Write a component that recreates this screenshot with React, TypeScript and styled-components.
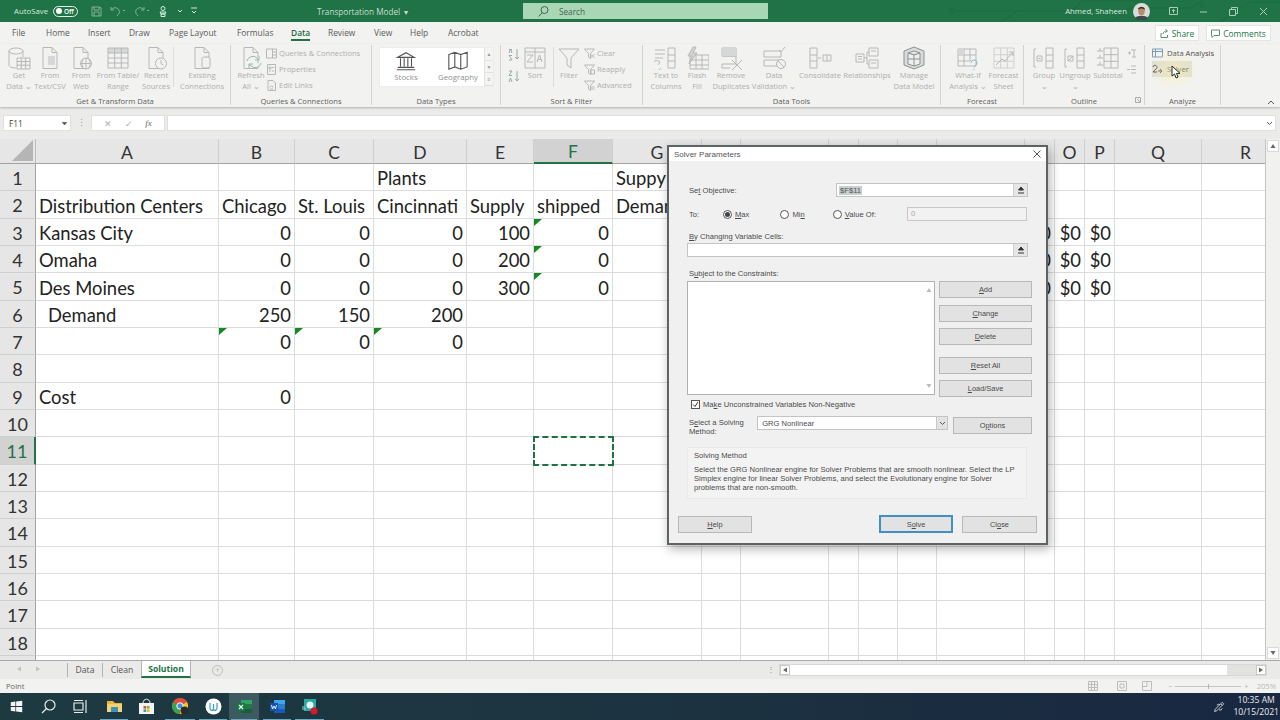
import React from 'react';
import styled, { createGlobalStyle } from 'styled-components';

const UI = `"Open Sans", "Noto Sans", sans-serif`;
const DLG = `"Liberation Sans", Arial, sans-serif`;

const Global = createGlobalStyle`
  html, body { margin: 0; padding: 0; background: #fff; }
  #root { width: 1280px; height: 720px; overflow: hidden; }
  * { box-sizing: border-box; }
`;

const Page = styled.div`
  position: relative; width: 1280px; height: 720px; overflow: hidden;
  display: flex; flex-direction: column; font-family: ${UI}; background: #f1f1ef;
`;

/* ---------- title bar ---------- */
const TitleBar = styled.div`
  position: relative; height: 22px; background: #207346; display: flex; align-items: center;
  color: #d5e8dc; font-size: 8.3px; flex: none; overflow: hidden;
`;
const QuickAccess = styled.div`width: 317px; flex: none; display: flex; align-items: center; padding-left: 14px;`;
const AutoSave = styled.span`width: 39px; flex: none; white-space: nowrap; font-size: 7.8px;`;
const Toggle = styled.span`
  width: 25px; height: 11px; border: 1px solid #e8f2ec; border-radius: 6px; display: flex; align-items: center;
  padding-left: 2px; gap: 2px; font-size: 6.5px; color: #fff; font-weight: 600; flex: none; margin-right: 12px;
  &::before { content: ''; width: 6px; height: 6px; border-radius: 50%; background: #fff; }
`;
const QaSvg = styled.svg<{ $w?: number }>`
  width: ${p => p.$w ?? 13}px; height: 13px; fill: none; stroke: #7fb296; stroke-width: 1; flex: none; margin-right: 6px;
`;
const DocTitle = styled.div`width: 206px; flex: none; white-space: nowrap; font-size: 8.2px; color: #c5dfd0;`;
const SearchBox = styled.div`
  width: 245px; height: 16px; flex: none; background: #a9d7b6; display: flex; align-items: center;
  padding-left: 14px; gap: 9px; color: #41674f; font-size: 8.2px;
`;
const UserArea = styled.div`margin-left: auto; display: flex; align-items: center; font-size: 7.8px; color: #d9eadf; position: relative;`;
const Avatar = styled.svg`width: 17px; height: 17px; margin: 0 19px 0 6px; flex: none;`;
const WinBtn = styled.svg`width: 9px; height: 9px; margin-right: 21px; fill: none; stroke: #a8ceb8; stroke-width: 1; flex: none;`;
const Circuit = styled.svg`position: absolute; left: 940px; top: 0; width: 340px; height: 22px; fill: none; stroke: #1d6a40; stroke-width: 1;`;

/* ---------- tabs ---------- */
const TabRow = styled.div`height: 22px; flex: none; display: flex; align-items: center; padding-left: 12px; background: #f2f2f0; position: relative;`;
const Tab = styled.div<{ $w: number; $on?: boolean }>`
  width: ${p => p.$w}px; flex: none; font-size: 8.4px; color: ${p => (p.$on ? '#1f6b41' : '#5a5a5a')};
  font-weight: ${p => (p.$on ? 600 : 400)}; white-space: nowrap; height: 22px; line-height: 22px;
  position: relative;
  ${p => p.$on ? `&::after { content: ''; position: absolute; left: 0; width: 19px; bottom: 3px; height: 2px; background: #217346; }` : ''}
`;
const TabActions = styled.div`margin-left: auto; display: flex; gap: 7px; padding-right: 9px; align-items: center;`;
const ActionBtn = styled.div<{ $w: number }>`
  width: ${p => p.$w}px; height: 16px; background: #fff; border: 1px solid #e4e4e2; color: #217346;
  font-size: 8.4px; display: flex; align-items: center; justify-content: center; gap: 3px; white-space: nowrap;
`;
const ActionIcon = styled.svg`width: 9px; height: 9px; fill: none; stroke: #5a8c70; stroke-width: 1; flex: none;`;

/* ---------- ribbon ---------- */
const Ribbon = styled.div`
  height: 63px; flex: none; display: flex; background: #f2f2f0; padding-top: 1px; position: relative;
  box-shadow: 0 1px 2px rgba(0,0,0,.25); z-index: 2;
`;
const Group = styled.div<{ $w: number }>`
  width: ${p => p.$w}px; flex: none; height: 60px; border-right: 1px solid #d3d3d1; display: flex; flex-direction: column;
`;
const GroupBody = styled.div<{ $pad?: number }>`height: 50px; display: flex; padding-left: ${p => p.$pad ?? 0}px; flex: none;`;
const GroupLabel = styled.div`font-size: 7.6px; color: #5e5e5e; text-align: center; line-height: 11px; white-space: nowrap; padding-top: 1px;`;
const Big = styled.div<{ $w: number }>`
  width: ${p => p.$w}px; flex: none; display: flex; flex-direction: column; align-items: center;
  padding-top: 1px; font-size: 7.6px; line-height: 11px; color: #adafaf; text-align: center; white-space: nowrap;
`;
const Ico = styled.svg<{ $s?: number; $dark?: boolean }>`
  width: ${p => p.$s ?? 24}px; height: ${p => p.$s ?? 24}px; flex: none; fill: none;
  stroke: ${p => (p.$dark ? '#555' : '#b6b8b8')}; stroke-width: 1;
`;
const VSep = styled.div<{ $ml?: number }>`width: 1px; height: 40px; background: #dcdcda; flex: none; margin: 2px 0 0 ${p => p.$ml ?? 0}px;`;
const SmallCol = styled.div<{ $w: number; $ml?: number }>`width: ${p => p.$w}px; flex: none; display: flex; flex-direction: column; margin-left: ${p => p.$ml ?? 0}px;`;
const Small = styled.div<{ $dark?: boolean; $hi?: boolean }>`
  height: 16px; display: flex; align-items: center; gap: 2px; font-size: 7.6px; white-space: nowrap;
  color: ${p => (p.$dark ? '#4c4c4c' : '#adafaf')}; ${p => p.$hi ? 'background:#dfdfd6;' : ''}
`;
const Gallery = styled.div`
  width: 115px; height: 40px; margin: 2px 0 0 7px; background: #fff; display: flex; flex: none; border: 1px solid #ececea;
  position: relative;
`;
const GalleryItem = styled.div<{ $w: number }>`
  width: ${p => p.$w}px; flex: none; display: flex; flex-direction: column; align-items: center; padding-top: 2px;
  font-size: 7.8px; color: #8f8f8f; line-height: 11px;
`;
const GalleryScroll = styled.div`width: 10px; margin-left: auto; display: flex; flex-direction: column; background: #f4f4f2; border-left: 1px solid #e2e2e0;`;
const GalleryStep = styled.div`flex: 1; border-bottom: 1px solid #e2e2e0; font-size: 5px; color: #9a9a9a; display: flex; align-items: center; justify-content: center;`;
const Collapse = styled.svg`position: absolute; right: 5px; bottom: 2px; width: 8px; height: 6px; fill: none; stroke: #555; stroke-width: 1;`;
const Launcher = styled.svg`position: absolute; right: 3px; bottom: 2px; width: 6px; height: 6px; fill: none; stroke: #aaa;`;
const RelGroup = styled(Group)`position: relative;`;

/* ---------- formula bar ---------- */
const FormulaBar = styled.div`height: 32px; flex: none; background: #ebebea; display: flex; align-items: flex-start; padding: 8px 4px 0 3px;`;
const NameBox = styled.div`
  width: 68px; height: 16px; background: #fff; border: 1px solid #e0e0e0; font-size: 8.4px; color: #444; flex: none;
  padding-left: 5px; display: flex; align-items: center; justify-content: space-between; padding-right: 3px;
`;
const Dots = styled.div`width: 20px; flex: none; color: #999; font-size: 9px; text-align: center; line-height: 15px;`;
const FxBox = styled.div`
  width: 74px; height: 16px; background: #fff; border: 1px solid #e0e0e0; flex: none; display: flex; align-items: center;
  justify-content: space-around; padding: 0 6px; color: #b0b0b0; font-size: 9px;
`;
const FxLabel = styled.span`font-family: "Liberation Serif", serif; font-style: italic; color: #666; font-size: 9px;`;
const FormulaInput = styled.div`
  flex: 1; margin-left: 2px; height: 16px; background: #fff; border: 1px solid #e0e0e0; display: flex; align-items: center;
  justify-content: flex-end; padding-right: 2px;
`;
const Chevron = styled.svg<{ $w?: number }>`width: ${p => p.$w ?? 7}px; height: 5px; fill: none; stroke: #555; stroke-width: 1;`;

/* ---------- sheet ---------- */
const SheetArea = styled.div`height: 521px; flex: none; display: flex; background: #fff; overflow: hidden;`;
const COLS = [183, 76, 79, 93, 67, 79, 89, 39, 88, 30, 39, 39, 88, 30, 30, 30, 87, 88];
const LETTERS = 'ABCDEFGHIJKLMNOPQR'.split('');
const Grid = styled.div`
  width: 1266px; flex: none; display: grid; overflow: hidden; height: 521px; border-right: 1px solid #c4c4c4;
  grid-template-columns: 36px ${COLS.map(c => c + 'px').join(' ')};
  grid-template-rows: 25px repeat(19, 27.33px);
  font-family: Lato, "Open Sans", sans-serif; font-size: 18.4px; color: #222;
`;
const Corner = styled.div`
  background: #e6e6e6; border-bottom: 1px solid #a3a3a3; border-right: 1px solid #bdbdbd; display: flex;
  align-items: flex-end; justify-content: flex-end; padding: 0 2px 2px 0;
`;
const CornerTri = styled.svg`width: 21px; height: 21px; fill: #b5b5b5;`;
const ColHead = styled.div<{ $sel?: boolean }>`
  background: ${p => (p.$sel ? '#d2d2d2' : '#e6e6e6')}; border-right: 1px solid #cfcfcf;
  border-bottom: ${p => (p.$sel ? '2px solid #217346' : '1px solid #a3a3a3')}; padding-top: 2px;
  color: ${p => (p.$sel ? '#217346' : '#333')}; font-size: 17.5px; display: flex; align-items: center; justify-content: center;
`;
const RowHead = styled.div<{ $sel?: boolean }>`
  background: ${p => (p.$sel ? '#d2d2d2' : '#e6e6e6')}; border-bottom: 1px solid #cfcfcf; padding-top: 2px;
  border-right: ${p => (p.$sel ? '2px solid #217346' : '1px solid #a3a3a3')};
  color: ${p => (p.$sel ? '#217346' : '#333')}; font-size: 18px; display: flex; align-items: center; justify-content: center;
`;
const Cell = styled.div<{ $right?: boolean; $indent?: boolean; $ants?: boolean }>`
  position: relative; border-right: 1px solid #dcdcdc; border-bottom: 1px solid #dcdcdc; white-space: nowrap;
  display: flex; align-items: flex-end; line-height: 24px; overflow: visible; padding: 0 3px;
  justify-content: ${p => (p.$right ? 'flex-end' : 'flex-start')};
  ${p => p.$indent ? 'padding-left: 12px;' : ''}
  ${p => p.$ants ? 'outline: 2px dashed #1f7144; outline-offset: -1px; z-index: 1;' : ''}
`;
const ErrorMark = styled.span`
  position: absolute; left: 0; top: 0; width: 0; height: 0; border-top: 7px solid #13891f; border-right: 8px solid transparent;
`;
const VScroll = styled.div`
  width: 14px; flex: none; background: #f1f1ef; display: flex; flex-direction: column; justify-content: space-between; padding: 1px;
`;
const ScrollBtn = styled.div`
  height: 12px; background: #fff; border: 1px solid #dadada; display: flex; align-items: center; justify-content: center;
`;
const Arrow = styled.svg<{ $c?: string }>`width: 6px; height: 6px; fill: ${p => p.$c ?? '#666'}; stroke: none; flex: none;`;

/* ---------- sheet tabs ---------- */
const TabsBar = styled.div`height: 19px; flex: none; display: flex; align-items: flex-start; background: #eaeae9; border-top: 1px solid #a8a8a8;`;
const NavArrows = styled.div`width: 67px; flex: none; display: flex; gap: 13px; padding: 5px 0 0 16px;`;
const SheetTab = styled.div<{ $w: number; $on?: boolean }>`
  width: ${p => p.$w}px; height: ${p => (p.$on ? 17 : 14)}px; flex: none; font-size: 8.6px; display: flex; align-items: center; justify-content: center;
  color: ${p => (p.$on ? '#217346' : '#555')}; font-weight: ${p => (p.$on ? 700 : 400)};
  border-left: 1px solid #b4b4b4; margin-top: ${p => (p.$on ? 0 : 2)}px;
  background: ${p => (p.$on ? '#fff' : 'transparent')};
  ${p => p.$on ? 'border-bottom: 2px solid #217346; border-right: 1px solid #b4b4b4;' : ''}
`;
const AddSheet = styled.div`
  width: 11px; height: 11px; border-radius: 50%; border: 1px solid #bcbcbc; color: #bcbcbc; flex: none; margin: 4px 0 0 21px;
  font-size: 9px; line-height: 8px; text-align: center;
`;
const TabSplit = styled.div`width: 1px; flex: none; color: #888; margin: 0 0 0 544px; font-size: 8px; line-height: 16px;`;
const HScroll = styled.div`
  width: 488px; height: 12px; margin: 3px 0 0 11px; flex: none; display: flex; background: #e2e2e0; border: 1px solid #d8d8d8;
`;
const HBtn = styled.div<{ $end?: boolean }>`
  width: 10px; flex: none; background: #fff; border: 1px solid #c8c8c8; display: flex; align-items: center; justify-content: center;
  ${p => p.$end ? 'margin-left: auto;' : ''}
`;
const HThumb = styled.div`width: 437px; flex: none; background: #fff;`;

/* ---------- status ---------- */
const StatusBar = styled.div`height: 14px; flex: none; background: #f2f2f0; display: flex; align-items: center; padding-left: 6px; font-size: 7.6px; color: #666;`;
const StatusRight = styled.div`margin-left: auto; display: flex; align-items: center; color: #b9b9b9; padding-right: 4px;`;
const StatusIco = styled.svg<{ $mr: number }>`width: 10px; height: 10px; fill: none; stroke: #bdbdbd; stroke-width: 1; margin-right: ${p => p.$mr}px; flex: none;`;
const ZoomTrack = styled.div`
  position: relative; width: 66px; height: 1px; background: #c6c6c6; margin: 0 3px;
  &::after { content: ''; position: absolute; left: 33px; top: -2px; width: 1px; height: 5px; background: #b5b5b5; }
`;
const ZoomPct = styled.span`margin-left: 8px;`;

/* ---------- taskbar ---------- */
const Taskbar = styled.div`
  height: 27px; flex: none; background: linear-gradient(90deg, #1e3a41 0%, #1c3440 45%, #192741 100%);
  display: flex; align-items: center; color: #f2f2f2;
`;
const TaskSlot = styled.div<{ $w: number; $on?: boolean; $open?: boolean; $ml?: number }>`
  width: ${p => p.$w}px; height: 27px; flex: none; display: flex; align-items: center; justify-content: center; position: relative;
  margin-left: ${p => p.$ml ?? 0}px;
  background: ${p => (p.$on ? '#3d5a60' : 'transparent')};
  ${p => p.$open ? `&::after { content: ''; position: absolute; left: 2px; right: 2px; bottom: 0; height: 1.5px; background: #6ea6c6; }` : ''}
`;
const TaskIcon = styled.svg<{ $s?: number }>`width: ${p => p.$s ?? 17}px; height: ${p => p.$s ?? 17}px; flex: none;`;
const Clock = styled.div`margin-left: auto; display: flex; align-items: center; padding-right: 1px;`;
const PenIcon = styled(TaskIcon)`margin-right: 7px;`;
const ClockText = styled.div`font-size: 8.6px; line-height: 12px; text-align: right; color: #e8edf0; white-space: nowrap; margin-bottom: 2px;`;
const ClockLine = styled.div`text-align: center;`;

/* ---------- dialog ---------- */
const Dialog = styled.div`
  position: absolute; left: 667px; top: 145px; width: 381px; height: 400px; z-index: 5; background: #f0f0f0;
  border: 2px solid #5e6366; box-shadow: 2px 4px 10px rgba(0,0,0,.3); display: flex; flex-direction: column;
  font-family: ${DLG}; font-size: 7.6px; color: #4a4a4a; letter-spacing: .02px;
`;
const DlgTitle = styled.div`
  height: 14px; flex: none; background: #fff; display: flex; align-items: center; justify-content: space-between;
  padding: 0 5px 0 5px; font-size: 8px; color: #555;
`;
const DlgClose = styled.svg`width: 8px; height: 8px; fill: none; stroke: #555; stroke-width: 1;`;
const DlgBody = styled.div`flex: 1; padding: 22px 0 0 18px; display: flex; flex-direction: column;`;
const DlgRow = styled.div<{ $mt?: number; $top?: boolean }>`
  display: flex; align-items: ${p => (p.$top ? 'flex-start' : 'center')}; margin-top: ${p => p.$mt ?? 0}px; flex: none;
`;
const Lbl = styled.span<{ $w?: number }>`
  ${p => (p.$w ? `width: ${p.$w}px; flex: none;` : '')} padding-left: 2px; white-space: nowrap;
`;
const RefInput = styled.div<{ $w: number }>`
  width: ${p => p.$w}px; height: 14px; background: #fff; border: 1px solid #c4c4c4; flex: none; display: flex; align-items: center;
  justify-content: space-between; padding-left: 2px;
`;
const Selected = styled.span`background: #c9cfcf; color: #555; padding: 0 1px;`;
const RefBtn = styled.div`
  width: 14px; height: 12px; background: #e6e6e6; border-left: 1px solid #d0d0d0; display: flex; align-items: center; justify-content: center;
`;
const RefIcon = styled.svg`width: 8px; height: 8px; fill: #333; stroke: #333;`;
const Radio = styled.span<{ $on?: boolean; $ml: number }>`
  width: 9px; height: 9px; border-radius: 50%; border: 1px solid #555; background: #fff; flex: none; margin: 0 3px 0 ${p => p.$ml}px;
  display: flex; align-items: center; justify-content: center;
  ${p => p.$on ? `&::after { content: ''; width: 5px; height: 5px; border-radius: 50%; background: #444; }` : ''}
`;
const RadioText = styled.span`white-space: nowrap; flex: none;`;
const ValueInput = styled.div`
  width: 120px; height: 14px; border: 1px solid #c8c8c8; background: #f2f2f2; color: #a8a8a8; flex: none; padding-left: 3px; line-height: 12px; margin-left: auto; margin-right: 19px;
`;
const Constraints = styled.div`
  width: 248px; height: 114px; background: #fff; border: 1px solid #b0b0b0; flex: none; display: flex; flex-direction: column;
  align-items: flex-end; justify-content: space-between; padding: 5px 2px;
`;
const SideButtons = styled.div`width: 93px; margin-left: 4px; display: flex; flex-direction: column; flex: none;`;
const DlgBtn = styled.div<{ $mt?: number; $ml?: number; $h?: number; $w?: number; $def?: boolean }>`
  width: ${p => (p.$w ? p.$w + 'px' : '100%')}; height: ${p => p.$h ?? 17}px; flex: none; margin-top: ${p => p.$mt ?? 0}px; margin-left: ${p => p.$ml ?? 0}px;
  background: #e2e2e2; border: 1px solid ${p => (p.$def ? '#3f8ec4' : '#b8b8b8')}; ${p => p.$def ? 'box-shadow: inset 0 0 0 1px #3f8ec4;' : ''}
  display: flex; align-items: center; justify-content: center; white-space: nowrap; font-size: 7.4px; color: #4a4a4a;
`;
const Check = styled.span`width: 9px; height: 9px; border: 1px solid #555; background: #fff; flex: none; margin: 0 3px 0 4px; display: flex;`;
const CheckIcon = styled.svg`width: 7px; height: 7px; fill: none; stroke: #333; stroke-width: 1;`;
const MethodLabel = styled.div`width: 70px; padding: 2px 0 0 2px; line-height: 9px; flex: none;`;
const Select = styled.div`
  width: 191px; height: 14px; background: #fff; border: 1px solid #c4c4c4; flex: none; display: flex; align-items: center; justify-content: space-between; padding-left: 2px;
`;
const SelectBtn = styled.div`width: 11px; height: 12px; background: #e2e2e2; border-left: 1px solid #c8c8c8; display: flex; align-items: center; justify-content: center;`;
const Info = styled.div`
  width: 340px; height: 52px; flex: none; margin-top: 11px; padding: 3px 2px 0 6px; background: #f3f3f3; border: 1px solid #e9e9e9; line-height: 9px;
`;
const InfoTitle = styled.div`margin-bottom: 5px;`;
const Footer = styled.div`display: flex; margin: 16px 0 0 -9px; width: 359px; justify-content: space-between; flex: none;`;
const FooterRight = styled.div`display: flex; gap: 9px;`;

/* ---------- cursor ---------- */
const Glow = styled.div`
  position: absolute; left: 1150px; top: 50px; width: 48px; height: 40px; z-index: 6; border-radius: 50%;
  background: radial-gradient(closest-side, rgba(250,240,170,.55), rgba(250,240,170,0));
`;
const Pointer = styled.svg`position: absolute; left: 1171px; top: 65px; width: 10px; height: 14px; z-index: 7;`;

/* ---------- icons ---------- */
const Doc = () => <path d="M5 1.5h9l5 5v16H5zM14 1.5v5h5" />;
const IDocMark = (m: React.ReactNode) => <Ico viewBox="0 0 24 24"><Doc />{m}</Ico>;
const GetData = () => (
  <Ico viewBox="0 0 24 24"><ellipse cx="9" cy="5" rx="7" ry="3" /><path d="M2 5v14c0 2 3 3 7 3M16 5v6" /><path fill="#f2f2f0" d="M10 12h13v11H10z" /><path d="M10 15.5h13M10 19.2h13M14.3 12v11M18.6 12v11" /></Ico>
);
const Sq = ({ x, y, w, h, f = '#d6d8d8' }: { x: number; y: number; w: number; h: number; f?: string }) => <rect x={x} y={y} width={w} height={h} fill={f} stroke="none" />;

const Underlined = ({ a, u, b }: { a?: string; u: string; b?: string }) => <>{a}<u>{u}</u>{b}</>;

const RefArrow = () => (
  <RefBtn><RefIcon viewBox="0 0 8 8"><path d="M4 1L1.5 4h5zM1 7h6" strokeWidth="1" /></RefIcon></RefBtn>
);

const Two = styled.span`display: block;`;
const Lines = ({ a, b }: { a: string; b: string }) => <><Two>{a}</Two><Two>{b}</Two></>;

const SmallIco = (p: { children: React.ReactNode; dark?: boolean }) => <Ico $s={11} $dark={p.dark} viewBox="0 0 11 11">{p.children}</Ico>;
const Tri = ({ d, c }: { d: string; c?: string }) => <Arrow $c={c} viewBox="0 0 6 6"><path d={d} /></Arrow>;

const CELLS: Record<string, { t: string; r?: boolean; tri?: boolean; ind?: boolean }> = {
  D1: { t: 'Plants' }, G1: { t: 'Suppy=' },
  A2: { t: 'Distribution Centers' }, B2: { t: 'Chicago' }, C2: { t: 'St. Louis' }, D2: { t: 'Cincinnati' }, E2: { t: 'Supply' }, F2: { t: 'shipped' }, G2: { t: 'Demand' },
  A3: { t: 'Kansas City' }, A4: { t: 'Omaha' }, A5: { t: 'Des Moines' }, A6: { t: 'Demand', ind: true }, A9: { t: 'Cost' },
  B3: { t: '0', r: true }, C3: { t: '0', r: true }, D3: { t: '0', r: true }, E3: { t: '100', r: true }, F3: { t: '0', r: true, tri: true },
  B4: { t: '0', r: true }, C4: { t: '0', r: true }, D4: { t: '0', r: true }, E4: { t: '200', r: true }, F4: { t: '0', r: true, tri: true },
  B5: { t: '0', r: true }, C5: { t: '0', r: true }, D5: { t: '0', r: true }, E5: { t: '300', r: true }, F5: { t: '0', r: true, tri: true },
  B6: { t: '250', r: true }, C6: { t: '150', r: true }, D6: { t: '200', r: true },
  B7: { t: '0', r: true, tri: true }, C7: { t: '0', r: true, tri: true }, D7: { t: '0', r: true, tri: true },
  B9: { t: '0', r: true },
  N3: { t: '$0', r: true }, O3: { t: '$0', r: true }, P3: { t: '$0', r: true },
  N4: { t: '$0', r: true }, O4: { t: '$0', r: true }, P4: { t: '$0', r: true },
  N5: { t: '$0', r: true }, O5: { t: '$0', r: true }, P5: { t: '$0', r: true },
};

const Sheet = () => (
  <Grid>
    <Corner><CornerTri viewBox="0 0 21 21"><path d="M21 0v21H0z" /></CornerTri></Corner>
    {LETTERS.map(l => <ColHead key={l} $sel={l === 'F'}>{l}</ColHead>)}
    {Array.from({ length: 19 }, (_, i) => i + 1).map(r => (
      <React.Fragment key={r}>
        <RowHead $sel={r === 11}>{r < 19 ? r : null}</RowHead>
        {LETTERS.map(l => {
          const c = CELLS[l + r];
          return (
            <Cell key={l} $right={c?.r} $indent={c?.ind} $ants={l === 'F' && r === 11}>
              {c?.tri && <ErrorMark />}
              {c?.t}
            </Cell>
          );
        })}
      </React.Fragment>
    ))}
  </Grid>
);

const TABS: [string, number][] = [['File', 34], ['Home', 42], ['Insert', 41], ['Draw', 40], ['Page Layout', 68], ['Formulas', 54], ['Data', 37], ['Review', 46], ['View', 36], ['Help', 38], ['Acrobat', 40]];

export default function App() {
  return (
    <Page>
      <Global />
      <TitleBar>
        <Circuit viewBox="0 0 340 22"><path d="M12 11h120l10-10h60M60 22l18-11M170 22l20-14h60l14-8M280 22l30-20h30" /><circle cx="12" cy="11" r="2.5" /><circle cx="262" cy="6" r="2" /></Circuit>
        <QuickAccess>
          <AutoSave>AutoSave</AutoSave>
          <Toggle>Off</Toggle>
          <QaSvg viewBox="0 0 13 13"><path d="M2 2h8l1 1v8H2zM4 2v3h5V2M4 11V7h5v4" /></QaSvg>
          <QaSvg viewBox="0 0 18 13" $w={18}><path d="M2 5c2-3 6-3 8 0 1 2 0 4-2 6M2 2v3h3M14 5l1 1 1-1" /></QaSvg>
          <QaSvg viewBox="0 0 18 13" $w={18}><path d="M11 5C9 2 5 2 3 5c-1 2 0 4 2 6M11 2v3H8M14 5l1 1 1-1" /></QaSvg>
          <QaSvg viewBox="0 0 13 13" style={{ stroke: '#d9eadf' }}><circle cx="6" cy="3.5" r="2" /><path d="M3 7h6l-1 2H4zM4 9h4v2.5H4z" /></QaSvg>
          <QaSvg viewBox="0 0 8 13" $w={8} style={{ stroke: '#d9eadf' }}><path d="M2 5l2 2 2-2" /></QaSvg>
          <QaSvg viewBox="0 0 8 13" $w={8} style={{ stroke: '#d9eadf' }}><path d="M1 3h6M2 6l2 2 2-2" /></QaSvg>
        </QuickAccess>
        <DocTitle>Transportation Model &nbsp;▾</DocTitle>
        <SearchBox>
          <QaSvg viewBox="0 0 13 13" style={{ stroke: '#41674f', marginRight: 0 }}><circle cx="7.5" cy="5" r="3.5" /><path d="M5 8l-3.5 3.5" /></QaSvg>
          Search
        </SearchBox>
        <UserArea>
          Ahmed, Shaheen
          <Avatar viewBox="0 0 17 17"><circle cx="8.5" cy="8.5" r="8.5" fill="#d8dcdc" /><path d="M2 15c2-3 11-3 13 0a8.5 8.5 0 0 1-13 0z" fill="#3c4a50" /><ellipse cx="8.5" cy="8" rx="3.3" ry="4.2" fill="#b98a6c" /><path d="M5 7c-.5-4 7.5-4 7 0-1-2-6-2-7 0z" fill="#2a2420" /></Avatar>
          <WinBtn viewBox="0 0 9 9"><path d="M.5.5h8v7h-8zM4.5 6V2.5M3 4l1.5-1.5L6 4" /></WinBtn>
          <WinBtn viewBox="0 0 9 9"><path d="M1 5h7" /></WinBtn>
          <WinBtn viewBox="0 0 9 9"><path d="M.5 2.5h6v6h-6zM2.5 2.5v-2h6v6h-2" /></WinBtn>
          <WinBtn viewBox="0 0 9 9" style={{ marginRight: 12 }}><path d="M1 1l7 7M8 1L1 8" /></WinBtn>
        </UserArea>
      </TitleBar>

      <TabRow>
        {TABS.map(([t, w]) => <Tab key={t} $w={w} $on={t === 'Data'}>{t}</Tab>)}
        <TabActions>
          <ActionBtn $w={44}><ActionIcon viewBox="0 0 9 9"><path d="M1 4v4.5h6.5V6M3 5c0-2 2-3 4-3M5.5.5L7.5 2 5.5 3.5" /></ActionIcon>Share</ActionBtn>
          <ActionBtn $w={65}><ActionIcon viewBox="0 0 9 9"><path d="M.5 1h8v5.5H3L1 8.5V6.5H.5z" /></ActionIcon>Comments</ActionBtn>
        </TabActions>
      </TabRow>

      <Ribbon>
        <Group $w={231}>
          <GroupBody $pad={3}>
            <Big $w={32}><GetData /><Lines a="Get" b="Data ⌄" /></Big>
            <Big $w={30}>{IDocMark(<><Sq x={10} y={10} w={7} h={9} /></>)}<Lines a="From" b="Text/CSV" /></Big>
            <Big $w={32}>{IDocMark(<><circle cx="17" cy="17.5" r="5.5" fill="#f2f2f0" /><path d="M11.5 17.5h11M17 12v11M14.5 12.5c-2 3-2 7 0 10M19.5 12.5c2 3 2 7 0 10" /></>)}<Lines a="From" b="Web" /></Big>
            <Big $w={42}><Ico viewBox="0 0 24 24"><Sq x={2} y={2} w={20} h={5} /><path d="M2 2h20v20H2zM2 7h20M2 12h20M2 17h20M8.7 2v20M15.3 2v20" /></Ico><Lines a="From Table/" b="Range" /></Big>
            <Big $w={34}>{IDocMark(<><circle cx="17" cy="17.5" r="5.5" fill="#f2f2f0" /><path d="M17 14v3.5l2.5 1.5" /></>)}<Lines a="Recent" b="Sources" /></Big>
            <VSep />
            <Big $w={56}>{IDocMark(<><ellipse cx="16" cy="12.5" rx="4" ry="1.6" fill="#f2f2f0" /><path d="M12 12.5v8c0 2 8 2 8 0v-8" fill="#f2f2f0" /></>)}<Lines a="Existing" b="Connections" /></Big>
          </GroupBody>
          <GroupLabel>Get &amp; Transform Data</GroupLabel>
        </Group>

        <Group $w={141}>
          <GroupBody $pad={5}>
            <Big $w={30}><Ico viewBox="0 0 24 24"><Doc /><path d="M8 15a6 6 0 0 1 10-3l2 2M22 17a6 6 0 0 1-10 3l-2-2M20 10v4h-4M10 22v-4h4" fill="#f2f2f0" stroke="#9fb4a9" /></Ico><Lines a="Refresh" b="All ⌄" /></Big>
            <SmallCol $w={104}>
              <Small><SmallIco><path d="M.5 1h10v9H.5zM6.5 1v9M7 4h3M7 7h3" /></SmallIco>Queries &amp; Connections</Small>
              <Small><SmallIco><path d="M1.5.5h8v10h-8zM3 3h2v2H3zM6 3.5h2M3 7h2M6 7h2" /></SmallIco>Properties</Small>
              <Small><SmallIco><path d="M2 .5h5l2.5 2.5v7.5H2zM4 7.5a1.5 1.5 0 0 1 3 0M4 9h3" /></SmallIco>Edit Links</Small>
            </SmallCol>
          </GroupBody>
          <GroupLabel>Queries &amp; Connections</GroupLabel>
        </Group>

        <Group $w={129}>
          <GroupBody>
            <Gallery>
              <GalleryItem $w={52}>
                <Ico $dark $s={22} viewBox="0 0 24 24"><path d="M3 8l9-5 9 5zM6 9v9M10 9v9M14 9v9M18 9v9M3 19h18M2 21.5h20" strokeWidth="1.2" /></Ico>
                Stocks
              </GalleryItem>
              <GalleryItem $w={52}>
                <Ico $dark $s={22} viewBox="0 0 24 24"><path d="M2 5l6.5-2.5L15 5l7-2.5v16L15 21l-6.5-2.5L2 21zM8.5 2.5v16M15 5v16" strokeWidth="1.2" /></Ico>
                Geography
              </GalleryItem>
              <GalleryScroll><GalleryStep>▲</GalleryStep><GalleryStep>▼</GalleryStep><GalleryStep>≡</GalleryStep></GalleryScroll>
            </Gallery>
          </GroupBody>
          <GroupLabel>Data Types</GroupLabel>
        </Group>

        <Group $w={142}>
          <GroupBody $pad={7}>
            <SmallCol $w={13}>
              <Ico $s={13} viewBox="0 0 13 13" style={{ marginTop: 3 }}><path d="M1 1.5h3M1 5l1.5-4L4 5M1 12h3M4 7.5H1l3 4M9 1v10M7 9l2 2 2-2" stroke="#9aa" /></Ico>
              <Ico $s={13} viewBox="0 0 13 13" style={{ marginTop: 9 }}><path d="M1 1h3L1 5.5h3M1 12l1.5-4L4 12M9 1v10M7 9l2 2 2-2" stroke="#9aa" /></Ico>
            </SmallCol>
            <Big $w={28}><Ico viewBox="0 0 24 24"><path d="M2 2h20v20H2zM12 2v20M2 6h20" /><path d="M4 9h6L4 16h6M14 16l2.5-7 2.5 7M15 13.5h3" /></Ico><Lines a="Sort" b="" /></Big>
            <VSep $ml={4} />
            <Big $w={30}><Ico viewBox="0 0 24 24"><path d="M2 3h20l-8 9v10l-4-3v-7z" /></Ico><Lines a="Filter" b="" /></Big>
            <SmallCol $w={58}>
              <Small><SmallIco><path d="M.5 1h10l-4 4.5v5l-2-1.5V5.5zM6.5 6l4 4M10.5 6l-4 4" /></SmallIco>Clear</Small>
              <Small><SmallIco><path d="M.5 1h10l-4 4.5v5l-2-1.5V5.5zM7 6h3.5v4H7z" /></SmallIco>Reapply</Small>
              <Small><SmallIco><path d="M.5 1h10l-4 4.5v5l-2-1.5V5.5zM7 7h3.5M7 9h3.5" /></SmallIco>Advanced</Small>
            </SmallCol>
          </GroupBody>
          <GroupLabel>Sort &amp; Filter</GroupLabel>
        </Group>

        <Group $w={298}>
          <GroupBody $pad={3}>
            <Big $w={40}><Ico viewBox="0 0 24 24"><path d="M1 4h10M1 8h10M1 12h8M14 2h7v20h-7zM14 9h7M14 15h7M6 16a5 5 0 1 0 1 6M6 16l-2 3" /></Ico><Lines a="Text to" b="Columns" /></Big>
            <Big $w={22}><Ico viewBox="0 0 24 24"><path d="M5 9h19v14H5zM5 14h19M5 19h19M11 9v14M17 9v14" /><path d="M8 1L3 10h4l-3 8 8-11H8l3-6z" fill="#d3d5d5" /></Ico><Lines a="Flash" b="Fill" /></Big>
            <Big $w={46}><Ico viewBox="0 0 24 24"><path d="M3 2h14v8H3zM3 10h14v8H3M3 18v4h8" /><Sq x={3} y={2} w={14} h={8} /><path d="M13 14l10 10M23 14L13 24" /></Ico><Lines a="Remove" b="Duplicates" /></Big>
            <Big $w={40}><Ico viewBox="0 0 24 24"><path d="M2 5h17v6H2zM2 14h17v6H2zM17 4l2 2 4-5" /><circle cx="19" cy="18" r="4.5" fill="#f2f2f0" /><path d="M16 15l6 6" /></Ico><Lines a="Data" b="Validation ⌄" /></Big>
            <Big $w={52}><Ico viewBox="0 0 24 24"><path d="M2 2h7v20H2zM2 9h7M2 15h7M10 12h3M15 9h8v6h-8zM19 9v6" /></Ico><Lines a="Consolidate" b="" /></Big>
            <Big $w={42}><Ico viewBox="0 0 24 24"><path d="M1 8h8v8H1zM14 2h9v8h-9zM14 14h9v8h-9zM9 12h3V6h2M12 12v6h2M3 10.5h4M3 13h4M16 5h5M16 17h5" /></Ico><Lines a="Relationships" b="" /></Big>
            <Big $w={52}><Ico viewBox="0 0 24 24" style={{ stroke: '#8d9191' }}><path d="M12 1l10 4v14l-10 4-10-4V5z" fill="#d9dbdb" /><path d="M6 7l6-2 6 2v11l-6 2-6-2zM12 9v11M6 7l6 2 6-2M6 13h12" fill="#eef0ef" /></Ico><Lines a="Manage" b="Data Model" /></Big>
          </GroupBody>
          <GroupLabel>Data Tools</GroupLabel>
        </Group>

        <Group $w={83}>
          <GroupBody $pad={8}>
            <Big $w={38}><Ico viewBox="0 0 24 24"><path d="M2 3h18v17H2zM2 9h18M2 15h12M8 3v17M14 3v12" /><Sq x={2} y={3} w={6} h={6} /><path d="M15 17a3 3 0 1 1 4.5 2.5c-1 .7-1.5 1-1.5 2M18 23v1" stroke="#8fb3c9" /></Ico><Lines a="What-If" b="Analysis ⌄" /></Big>
            <Big $w={33}><Ico viewBox="0 0 24 24"><path d="M2 2h20v20H2zM2 8.7h20M2 15.3h20M8.7 2v20M15.3 2v20" stroke="#cfd1d1" /><path d="M4 19l6-6 3 2 8-9M17 6h4v4" /></Ico><Lines a="Forecast" b="Sheet" /></Big>
          </GroupBody>
          <GroupLabel>Forecast</GroupLabel>
        </Group>

        <RelGroup $w={121}>
          <GroupBody $pad={4}>
            <Big $w={32}><Ico viewBox="0 0 24 24"><path d="M14 2h7v20h-7zM14 9h7M14 15h7M4 3H2v18h2M5 10h5v5H5zM6.5 12.5h2" /></Ico><Lines a="Group" b="⌄" /></Big>
            <Big $w={30}><Ico viewBox="0 0 24 24"><path d="M14 2h7v20h-7zM14 9h7M14 15h7M4 3H2v18h2M5 10h5v5H5z" /><path d="M5 15l5-5" /></Ico><Lines a="Ungroup" b="⌄" /></Big>
            <Big $w={36}><Ico viewBox="0 0 24 24"><path d="M8 2h14v20H8zM8 8.7h14M8 15.3h14M15 2v20M1 5h6M1 12h6M1 19h6M4 2v3M4 9v3M4 16v3" /></Ico><Lines a="Subtotal" b="" /></Big>
            <SmallCol $w={14}>
              <Small><SmallIco><path d="M5 2h5M8 2v7M2 5h3M3.5 3.5v3M6 9h4" /></SmallIco></Small>
              <Small><SmallIco><path d="M5 2h5M5 5.5h5M5 9h5M1 5.5h3" /></SmallIco></Small>
            </SmallCol>
          </GroupBody>
          <GroupLabel>Outline</GroupLabel>
          <Launcher viewBox="0 0 6 6"><path d="M.5.5h5v5h-5zM2 2l3 3" /></Launcher>
        </RelGroup>

        <Group $w={76}>
          <GroupBody $pad={6}>
            <SmallCol $w={40} $ml={1}>
              <Small $dark><SmallIco dark><path d="M.5 1h10v8h-10zM.5 3.5h10M3.5 1v8" stroke="#7a9db5" /></SmallIco>&nbsp;Data Analysis</Small>
              <Small $dark $hi><SmallIco dark><path d="M1 3a2 2 0 1 1 3 2L1 8h4M6 7h4M8 5l2 2-2 2" /></SmallIco>&nbsp;Solver</Small>
            </SmallCol>
          </GroupBody>
          <GroupLabel>Analyze</GroupLabel>
        </Group>

        <Collapse viewBox="0 0 8 6"><path d="M1 5l3-3 3 3" /></Collapse>
      </Ribbon>

      <FormulaBar>
        <NameBox>F11<Chevron $w={5} viewBox="0 0 7 5"><path d="M.5 1h6L3.5 4.5z" fill="#555" /></Chevron></NameBox>
        <Dots>⋮</Dots>
        <FxBox><span>✕</span><span>✓</span><FxLabel>fx</FxLabel></FxBox>
        <FormulaInput><Chevron viewBox="0 0 7 5"><path d="M1 1l2.5 2.5L6 1" /></Chevron></FormulaInput>
      </FormulaBar>

      <SheetArea>
        <Sheet />
        <VScroll>
          <ScrollBtn><Tri d="M3 1L.5 5h5z" /></ScrollBtn>
          <ScrollBtn><Tri d="M3 5L.5 1h5z" /></ScrollBtn>
        </VScroll>
      </SheetArea>

      <TabsBar>
        <NavArrows>
          <Tri c="#c0c0c0" d="M1 3l4-2.5v5z" />
          <Tri c="#c0c0c0" d="M5 3L1 .5v5z" />
        </NavArrows>
        <SheetTab $w={35}>Data</SheetTab>
        <SheetTab $w={39}>Clean</SheetTab>
        <SheetTab $w={50} $on>Solution</SheetTab>
        <AddSheet>+</AddSheet>
        <TabSplit>⋮</TabSplit>
        <HScroll>
          <HBtn><Tri d="M1 3l4-2.5v5z" /></HBtn>
          <HThumb />
          <HBtn $end><Tri d="M5 3L1 .5v5z" /></HBtn>
        </HScroll>
      </TabsBar>

      <StatusBar>
        Point
        <StatusRight>
          <StatusIco $mr={19} viewBox="0 0 10 10"><path d="M.5.5h9v9h-9zM3.5.5v9M6.5.5v9M.5 3.5h9M.5 6.5h9" /></StatusIco>
          <StatusIco $mr={15} viewBox="0 0 10 10"><path d="M.5.5h9v9h-9zM3 3h4v4H3z" /></StatusIco>
          <StatusIco $mr={16} viewBox="0 0 10 10"><path d="M.5.5h9v9h-9zM5 .5v5H.5" /></StatusIco>
          <span>−</span><ZoomTrack /><span>+</span>
          <ZoomPct>205%</ZoomPct>
        </StatusRight>
      </StatusBar>

      <Taskbar>
        <TaskSlot $w={32}><TaskIcon $s={13} viewBox="0 0 17 17"><path fill="#f4f6f6" d="M1 3l6-1v6H1zM8 2l8-1v7H8zM1 9h6v6l-6-1zM8 9h8v7l-8-1z" /></TaskIcon></TaskSlot>
        <TaskSlot $w={32}><TaskIcon viewBox="0 0 17 17" fill="none" stroke="#e8ecec" strokeWidth="1.2"><circle cx="10" cy="7" r="5" /><path d="M6.5 10.5L2 15" /></TaskIcon></TaskSlot>
        <TaskSlot $w={32}><TaskIcon viewBox="0 0 17 17" fill="none" stroke="#e8ecec" strokeWidth="1.2"><path d="M2 5h9v7H2zM2 2.5h9M2 14.5h9M14 2v13" /></TaskIcon></TaskSlot>
        <TaskSlot $w={32} $ml={2} $open><TaskIcon viewBox="0 0 17 17"><path fill="#e8b83e" d="M1 3h6l2 2h7v9H1z" /><path fill="#f6d36c" d="M1 6h15v8H1z" /><path fill="#3d8fc8" d="M5 9h7v5H5z" /></TaskIcon></TaskSlot>
        <TaskSlot $w={33}><TaskIcon viewBox="0 0 17 17"><path fill="#f4f4f4" d="M1 5h15v11H1z" /><path fill="none" stroke="#f4f4f4" d="M5 5c0-5 7-5 7 0" /><path fill="#e6522c" d="M5.5 8h2.7v2.7H5.5z" /><path fill="#7eb83a" d="M8.8 8h2.7v2.7H8.8z" /><path fill="#2d9fd8" d="M5.5 11.3h2.7V14H5.5z" /><path fill="#f5b820" d="M8.8 11.3h2.7V14H8.8z" /></TaskIcon></TaskSlot>
        <TaskSlot $w={34} $open><TaskIcon viewBox="0 0 17 17"><circle cx="8" cy="8" r="8" fill="#d84a38" /><path d="M8 8L15 4a8 8 0 0 0-13-1z" fill="#e24f3c" /><path d="M8 8l7-4a8 8 0 0 1-7 12z" fill="#f4c430" /><path d="M8 8v8A8 8 0 0 1 1 4z" fill="#3ba34f" /><circle cx="8" cy="8" r="3.2" fill="#4a90d9" stroke="#fff" /><circle cx="12.5" cy="12.5" r="4" fill="#2c2a2a" /></TaskIcon></TaskSlot>
        <TaskSlot $w={32} $open><TaskIcon viewBox="0 0 17 17"><circle cx="8.5" cy="8.5" r="8" fill="#fff" /><path d="M5 5v5c0 3 3 3 3.5 1 .5 2 3.5 2 3.5-1V5M8.5 6v5" fill="none" stroke="#3a9bd0" strokeWidth="1.2" /></TaskIcon></TaskSlot>
        <TaskSlot $w={30} $on $open><TaskIcon viewBox="0 0 17 17"><path fill="#33a268" d="M5 2h11v4H5z" /><path fill="#21784a" d="M5 6h11v5H5z" /><path fill="#185c38" d="M5 11h11v4H5z" /><path fill="#107c41" d="M1 5h8v8H1z" /><path stroke="#fff" strokeWidth="1.1" fill="none" d="M3 7l4 4M7 7l-4 4" /></TaskIcon></TaskSlot>
        <TaskSlot $w={32} $ml={2} $open><TaskIcon viewBox="0 0 17 17"><path fill="#41a5ee" d="M5 2h11v4H5z" /><path fill="#2b7cd3" d="M5 6h11v5H5z" /><path fill="#185abd" d="M5 11h11v4H5z" /><path fill="#1552ad" d="M1 5h8v8H1z" /><path stroke="#fff" strokeWidth=".9" fill="none" d="M2.5 7l1 4 1.5-3 1.5 3 1-4" /></TaskIcon></TaskSlot>
        <TaskSlot $w={33} $open><TaskIcon viewBox="0 0 17 17"><path fill="#28a9a6" d="M3 1h12v12H3z" /><circle cx="9" cy="7" r="3.5" fill="#e8f6f6" /><circle cx="13" cy="13" r="3.5" fill="#d8182c" /><path stroke="#8fdad8" d="M1 9h3M1 11h4" /></TaskIcon></TaskSlot>
        <Clock>
          <PenIcon $s={13} viewBox="0 0 17 17" fill="none" stroke="#dfe5e8" strokeWidth="1.1"><path d="M2 15l3-1 9-9-2-2-9 9zM10 5l2 2M5 7a3 3 0 0 1 4-1M8 13a3 3 0 0 0 4-2" /></PenIcon>
          <ClockText>
            <ClockLine>10:35 AM</ClockLine>
            <ClockLine>10/15/2021</ClockLine>
          </ClockText>
        </Clock>
      </Taskbar>

      <Dialog>
        <DlgTitle>Solver Parameters<DlgClose viewBox="0 0 8 8"><path d="M.5.5l7 7M7.5.5l-7 7" /></DlgClose></DlgTitle>
        <DlgBody>
          <DlgRow>
            <Lbl $w={149}><Underlined a="Se" u="t" b=" Objective:" /></Lbl>
            <RefInput $w={192}><Selected>$F$11</Selected><RefArrow /></RefInput>
          </DlgRow>
          <DlgRow $mt={10}>
            <Lbl $w={36}>To:</Lbl>
            <Radio $on $ml={0} />
            <RadioText><u>M</u>ax</RadioText>
            <Radio $ml={31} />
            <RadioText>Mi<u>n</u></RadioText>
            <Radio $ml={28} />
            <RadioText><u>V</u>alue Of:</RadioText>
            <ValueInput>0</ValueInput>
          </DlgRow>
          <DlgRow $mt={11}><Lbl><Underlined u="B" b="y Changing Variable Cells:" /></Lbl></DlgRow>
          <DlgRow $mt={2}><RefInput $w={341}><span /><RefArrow /></RefInput></DlgRow>
          <DlgRow $mt={12}><Lbl>S<u>u</u>bject to the Constraints:</Lbl></DlgRow>
          <DlgRow $mt={3} $top>
            <Constraints>
              <Tri c="#bbb" d="M3 1L.5 5h5z" />
              <Tri c="#bbb" d="M3 5L.5 1h5z" />
            </Constraints>
            <SideButtons>
              <DlgBtn><u>A</u>dd</DlgBtn>
              <DlgBtn $mt={7}><u>C</u>hange</DlgBtn>
              <DlgBtn $mt={6}><u>D</u>elete</DlgBtn>
              <DlgBtn $mt={12}><u>R</u>eset All</DlgBtn>
              <DlgBtn $mt={6}><u>L</u>oad/Save</DlgBtn>
            </SideButtons>
          </DlgRow>
          <DlgRow $mt={3}>
            <Check><CheckIcon viewBox="0 0 7 7"><path d="M1 3.5l2 2 3-4.5" /></CheckIcon></Check>
            <span>Ma<u>k</u>e Unconstrained Variables Non-Negative</span>
          </DlgRow>
          <DlgRow $mt={7} $top>
            <MethodLabel>S<u>e</u>lect a Solving Method:</MethodLabel>
            <Select><span>&nbsp;GRG Nonlinear</span><SelectBtn><Chevron viewBox="0 0 7 5"><path d="M1 1l2.5 2.5L6 1" /></Chevron></SelectBtn></Select>
            <DlgBtn $w={79} $ml={5} $mt={1}>O<u>p</u>tions</DlgBtn>
          </DlgRow>
          <Info>
            <InfoTitle>Solving Method</InfoTitle>
            Select the GRG Nonlinear engine for Solver Problems that are smooth nonlinear. Select the LP Simplex engine for linear Solver Problems, and select the Evolutionary engine for Solver problems that are non-smooth.
          </Info>
          <Footer>
            <DlgBtn $w={74} $mt={1}><u>H</u>elp</DlgBtn>
            <FooterRight>
              <DlgBtn $w={74} $h={18} $def>S<u>o</u>lve</DlgBtn>
              <DlgBtn $w={75} $mt={1}>Cl<u>o</u>se</DlgBtn>
            </FooterRight>
          </Footer>
        </DlgBody>
      </Dialog>

      <Glow />
      <Pointer viewBox="0 0 10 14"><path d="M1 1v10l2.5-2 1.6 4 2-.9-1.6-3.7H9z" fill="#fff" stroke="#111" strokeWidth=".9" /></Pointer>
    </Page>
  );
}
